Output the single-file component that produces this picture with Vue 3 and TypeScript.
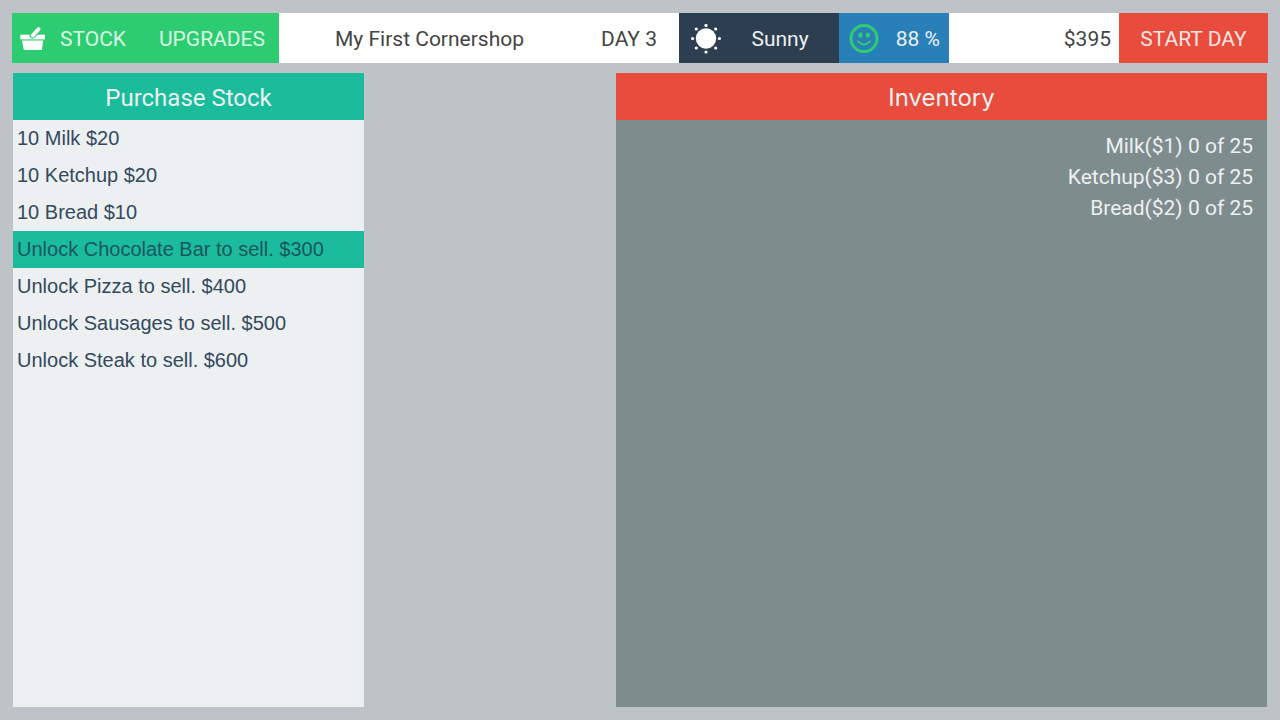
<script setup lang="ts">
import { ref } from 'vue'

interface Offer {
  label: string
  price: number
}

interface StockItem {
  name: string
  price: number
  count: number
  capacity: number
}

const offers: Offer[] = [
  { label: '10 Milk', price: 20 },
  { label: '10 Ketchup', price: 20 },
  { label: '10 Bread', price: 10 },
  { label: 'Unlock Chocolate Bar to sell.', price: 300 },
  { label: 'Unlock Pizza to sell.', price: 400 },
  { label: 'Unlock Sausages to sell.', price: 500 },
  { label: 'Unlock Steak to sell.', price: 600 },
]

const inventory: StockItem[] = [
  { name: 'Milk', price: 1, count: 0, capacity: 25 },
  { name: 'Ketchup', price: 3, count: 0, capacity: 25 },
  { name: 'Bread', price: 2, count: 0, capacity: 25 },
]

const selected = ref(3)
</script>

<template>
  <div class="game">
    <header class="bar">
      <nav class="tabs">
        <button type="button" class="tab">
          <svg class="basket" viewBox="0 0 26 26" aria-hidden="true">
            <path d="M0.3 8.7H25V13.4H0.3Z" fill="#fff" />
            <path d="M2 14.4H23.2L21.8 24H3.8Z" fill="#fff" />
            <path d="M12.6 9.6L18.6 3" stroke="#2ecc71" stroke-width="6" stroke-linecap="round" />
            <path d="M12.6 9.6L18.6 3" stroke="#fff" stroke-width="3.8" stroke-linecap="round" />
          </svg>
          <span>STOCK</span>
        </button>
        <button type="button" class="tab">UPGRADES</button>
      </nav>
      <div class="shop">
        <h1 class="name">My First Cornershop</h1>
        <span class="day">DAY 3</span>
      </div>
      <div class="weather">
        <svg class="icon" viewBox="0 0 30 30" aria-hidden="true">
          <g fill="#fff">
            <circle cx="15" cy="14.5" r="10.2" />
            <circle cx="15" cy="1.5" r="1.6" />
            <circle cx="24.7" cy="5" r="1.6" />
            <circle cx="28.4" cy="14.5" r="1.6" />
            <circle cx="24.7" cy="24" r="1.6" />
            <circle cx="15" cy="28" r="1.6" />
            <circle cx="5.3" cy="24" r="1.6" />
            <circle cx="1.6" cy="14.5" r="1.6" />
            <circle cx="5.3" cy="5" r="1.6" />
          </g>
        </svg>
        <span class="label">Sunny</span>
      </div>
      <div class="mood">
        <svg class="icon" viewBox="0 0 30 30" aria-hidden="true">
          <circle cx="15" cy="14.5" r="13" fill="none" stroke="#2ecc71" stroke-width="3" />
          <ellipse cx="11.4" cy="11.2" rx="2.2" ry="2.6" fill="#2ecc71" />
          <ellipse cx="18.8" cy="11.2" rx="2.2" ry="2.6" fill="#2ecc71" />
          <path d="M9 17.4Q15 23.6 21 17.4" fill="none" stroke="#2ecc71" stroke-width="2" stroke-linecap="round" />
        </svg>
        <span>88 %</span>
      </div>
      <div class="cash">$395</div>
      <button type="button" class="start">START DAY</button>
    </header>

    <main class="panels">
      <section class="panel purchase">
        <h2 class="title">Purchase Stock</h2>
        <ul class="offers">
          <li v-for="(offer, i) in offers" :key="offer.label">
            <button
              type="button"
              class="offer"
              :class="{ active: i === selected }"
              @click="selected = i"
            >{{ offer.label }} ${{ offer.price }}</button>
          </li>
        </ul>
      </section>
      <section class="panel inventory">
        <h2 class="title">Inventory</h2>
        <ul class="items">
          <li v-for="item in inventory" :key="item.name">
            {{ item.name }}(${{ item.price }}) {{ item.count }} of {{ item.capacity }}
          </li>
        </ul>
      </section>
    </main>
  </div>
</template>

<style>
body {
  margin: 0;
  background: #bdc3c7;
}
</style>

<style scoped>
.game {
  box-sizing: border-box;
  display: flex;
  flex-direction: column;
  gap: 10px;
  min-height: 100vh;
  padding: 13px 12px;
  background: #bdc3c7;
  font-family: Roboto, "Liberation Sans", sans-serif;
  font-size: 21px;
  line-height: 24px;
  color: #444;
}

button {
  margin: 0;
  padding: 0;
  border: 0;
  background: none;
  color: inherit;
  font: inherit;
  cursor: pointer;
}

h1,
h2,
ul {
  margin: 0;
  padding: 0;
  font: inherit;
  list-style: none;
}

.bar {
  display: grid;
  grid-template-columns: 267fr 400fr 160fr 110fr 170fr 149fr;
  min-height: 50px;
  white-space: nowrap;
}

.bar > * {
  display: flex;
  align-items: center;
  padding-top: 2px;
}

.tabs {
  justify-content: space-between;
  padding-right: 14px;
  padding-left: 8px;
  background: #2ecc71;
  color: #d9f8e5;
}

.tab {
  display: flex;
  align-items: center;
  gap: 14px;
}

.basket {
  width: 26px;
  height: 26px;
}

.icon {
  width: 30px;
  height: 30px;
}

.shop {
  justify-content: space-between;
  padding-right: 22px;
  padding-left: 56px;
  background: #fff;
}

.weather {
  padding-left: 12px;
  background: #2c3e50;
  color: #ecf0f1;
}

.label {
  flex: 1;
  text-align: center;
}

.mood {
  justify-content: space-between;
  padding-right: 9px;
  padding-left: 10px;
  background: #2980b9;
  color: #ecf0f1;
}

.cash {
  justify-content: flex-end;
  padding-right: 8px;
  background: #fff;
}

.start {
  justify-content: center;
  background: #e74c3c;
  color: #fbe6e3;
}

.panels {
  flex: 1;
  display: grid;
  grid-template-columns: 351fr 252fr 651fr;
  padding: 0 1px;
}

.title {
  padding: 13px 0 10px;
  font-size: 24px;
  text-align: center;
  color: #ecf0f1;
}

.purchase {
  background: #ecf0f1;
}

.purchase .title {
  background: #1abc9c;
}

.offer {
  width: 100%;
  padding: 0 4px;
  font-family: "Liberation Sans", Arial, sans-serif;
  font-size: 20px;
  line-height: 37px;
  text-align: left;
  color: #34495e;
}

.offer.active {
  background: #1abc9c;
  color: #1c5660;
}

.offers li {
  display: flex;
}

.inventory {
  grid-column: 3;
  background: #7f8c8d;
}

.inventory .title {
  background: #e74c3c;
  font-family: Inter, Roboto, sans-serif;
}

.items {
  padding: 11px 14px;
  line-height: 31px;
  text-align: right;
  color: #ecf0f1;
}
</style>
